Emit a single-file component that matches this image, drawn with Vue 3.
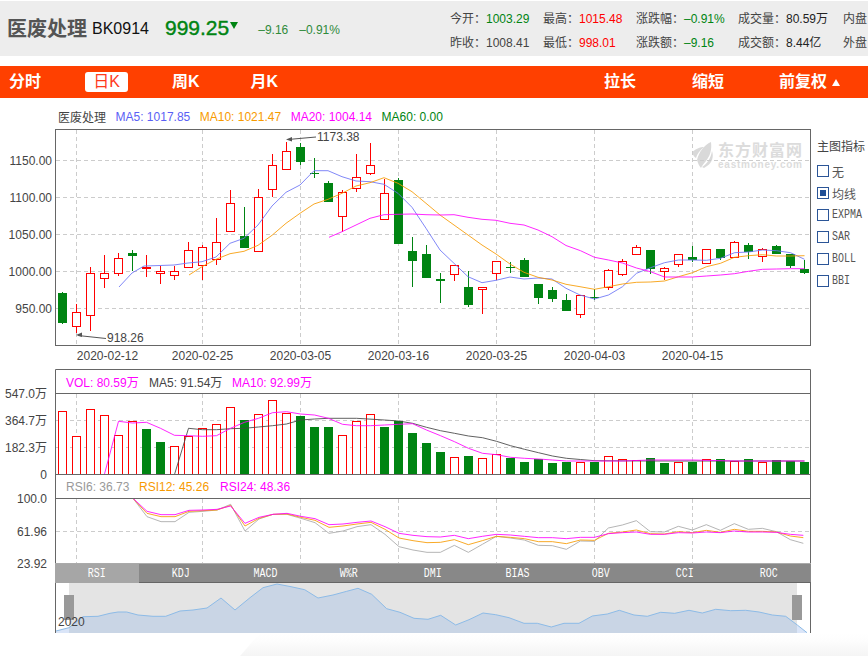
<script setup>
const stats = [
  [
    { k: '今开：', v: '1003.29', c: 'up', w: 93 },
    { k: '最高：', v: '1015.48', c: 'red', w: 93 },
    { k: '涨跌幅：', v: '–0.91%', c: 'up', w: 102 },
    { k: '成交量：', v: '80.59万', c: 'blk', w: 105 },
    { k: '内盘', v: '', c: 'blk', w: 25 },
  ],
  [
    { k: '昨收：', v: '1008.41', c: 'gry', w: 93 },
    { k: '最低：', v: '998.01', c: 'red', w: 93 },
    { k: '涨跌额：', v: '–9.16', c: 'up', w: 102 },
    { k: '成交额：', v: '8.44亿', c: 'blk', w: 105 },
    { k: '外盘', v: '', c: 'blk', w: 25 },
  ],
]

// [high, top, bottom, low, falling] in page pixels
const K = [
  [292,293,323,324,1],[304,312,326,333,0],[267,273,315,331,0],[255,273,278,288,0],[253,258,273,276,0],
  [250,253,256,271,1],[255,267,268,277,0],[266,271,273,284,0],[266,271,275,280,0],[242,250,267,268,0],
  [245,247,265,280,0],[218,242,259,265,0],[190,203,231,231,0],[207,236,248,248,1],[189,197,251,251,0],
  [154,165,189,197,0],[142,151,169,169,0],[143,147,162,165,1],[158,173,174,178,1],[181,183,202,202,1],
  [190,192,216,232,0],[154,177,188,192,0],[143,165,173,175,0],[179,193,219,219,0],[178,180,244,244,1],
  [237,251,261,287,1],[245,254,278,278,1],[273,279,281,303,1],[265,265,274,281,0],[271,287,305,307,1],
  [287,287,289,314,0],[261,261,273,280,0],[262,267,268,273,1],[258,260,277,277,1],[284,284,298,304,1],
  [287,290,299,302,1],[294,300,311,311,1],[295,295,314,318,0],[289,297,298,300,1],[269,270,287,290,0],
  [259,261,274,276,0],[245,247,254,254,0],[250,250,269,274,1],[267,268,271,280,0],[254,254,264,267,0],
  [246,257,260,262,1],[249,249,263,263,0],[249,249,258,260,1],[241,242,257,257,0],[243,245,252,259,1],
  [248,249,256,262,0],[245,246,254,254,1],[254,254,266,268,1],[260,269,273,274,1],
]
const candles = K.map(([h, t, b, l, f], i) => ({ c: 62.5 + 14 * i, h, t, b: Math.max(b, t + 1), l, f }))

// [top, falling]
const V = [
  [411,0],[436,0],[409,0],[415,0],[435,0],[421,0],[429,1],[442,1],[446,0],[436,0],[428,0],[424,0],[407,0],[420,1],
  [414,0],[400,0],[413,0],[416,1],[427,1],[427,1],[435,0],[421,0],[414,0],[427,1],[421,1],[433,1],[443,1],[452,1],
  [457,0],[456,1],[458,0],[454,0],[458,1],[462,1],[459,1],[463,1],[462,1],[462,0],[462,1],[456,0],[459,0],[460,0],
  [458,1],[463,1],[462,0],[462,1],[459,0],[459,1],[461,0],[459,1],[462,0],[460,1],[461,1],[462,1],
]
const vols = V.map(([t, f], i) => ({ c: 62.5 + 14 * i, t, f }))

const pts = (a) => a.map((p) => p.join(',')).join(' ')
const ma5 = pts([[119,287],[132,273],[144,266],[160,265.5],[174,265],[188,263],[202,261.7],[216,257],[230,243.3],[244,238.3],[258,225],[272,206],[286,192.3],[300,185],[314,170.7],[328,170.7],[342,176.7],[356,181],[370,181.7],[384,184.3],[398,193.3],[412,207.3],[426,228.3],[440,250],[454,263.3],[468,276.7],[482,282.7],[496,280.3],[510,277],[524,279],[538,278],[552,279],[566,288.3],[580,295],[594.5,299],[608.5,295],[622.5,286.7],[636.5,273.3],[650.5,267.7],[664.5,262.7],[678.5,260],[692.5,260],[706.5,260.3],[720.5,258.3],[734.5,252.7],[748.5,252],[762.5,250],[776.5,250.7],[790.5,252.7],[804.5,259.3]])
const ma10 = pts([[189,275],[202,266.7],[216,259.3],[230,253.7],[244,251.3],[258,245.3],[272,235.3],[286,223.3],[300,213.3],[314,204],[328,199.3],[342,193.3],[356,186],[370,182.7],[384,177.7],[398,183.3],[412,191.7],[426,203.3],[440,215],[454,225],[468,235],[482,245],[496,254],[510,264],[524,272.3],[538,277.3],[552,280],[566,284.3],[580,286.7],[594.5,289.3],[608.5,286.7],[622.5,284],[636.5,282.3],[650.5,282],[664.5,281],[678.5,276.7],[692.5,272.7],[706.5,266.7],[720.5,263.3],[734.5,257.3],[748.5,255.7],[762.5,254.7],[776.5,256],[790.5,256],[804.5,255.7]])
const ma20 = pts([[329,237.3],[342,231.7],[356,225],[370,218.3],[384,214.7],[398,214.3],[412,214],[426,214.7],[440,215],[454,214.7],[468,217.3],[482,219.3],[496,220.3],[510,223.3],[524,225],[538,230],[552,236.7],[566,245.5],[580.5,250.7],[594.5,257.3],[608.5,260],[622.5,263],[636.5,268],[650.5,271.7],[664.5,277],[678.5,277],[692.5,277],[706.5,276],[720.5,275],[734.5,273.7],[748.5,271.3],[762.5,269.3],[776.5,269],[790.5,268.7],[804.5,268.7]])

const volMa5 = pts([[104.5,474],[118.5,421.3],[132.5,423],[146.5,422.3],[160.5,428.3],[174.5,435.3],[188.5,435.7],[202.5,436.3],[216.5,435.7],[230.5,428.3],[244.5,422.3],[258.5,418.3],[272.5,412.7],[286.5,411.7],[300.5,414],[314.5,415],[328.5,418.3],[342.5,424.3],[356.5,425.7],[370.5,425.7],[384.5,425],[398.5,424.3],[412.5,423.7],[426.5,430],[440.5,435.7],[454.5,441.7],[468.5,448.3],[482.5,453.3],[496.5,454.7],[510.5,457.3],[524.5,458.3],[538.5,459],[552.5,460],[566.5,461],[622.5,461],[650.5,460],[692.5,460],[734.5,461],[804.5,461]])
const volMa10 = pts([[62.5,474.5],[174.5,474.5],[188.5,428.3],[202.5,429.7],[216.5,429.7],[230.5,428.7],[244.5,428.3],[258.5,427],[272.5,425.7],[286.5,424],[300.5,420],[314.5,419],[328.5,418.3],[356.5,418.3],[384.5,420],[398.5,421],[412.5,423.3],[426.5,427.3],[440.5,430.7],[454.5,433.3],[468.5,436],[482.5,437.7],[496.5,441.3],[510.5,445.7],[524.5,449.3],[538.5,452.7],[552.5,456],[566.5,458.3],[580.5,459.5],[594.5,460.7],[650.5,461],[804.5,461]])

const rz = (a, b) => pts([
  ...a.map(([x, y]) => [x / 3, 476 + y / 3]),
  ...b.map(([x, y]) => [434 + x / 3, 476 + y / 3]),
])
const rsi6 = rz(
  [[399,67],[441,122],[483,137],[525,137],[567,109],[609,106],[651,102],[692,85],[735,165],[777,129],[819,115],[861,115],[903,127],[945,140],[987,172],[1029,165],[1071,152],[1113,146],[1155,175],[1197,212],[1239,222],[1281,229]],
  [[19,229],[61,208],[103,229],[145,205],[187,181],[229,186],[271,192],[313,208],[355,209],[397,220],[439,195],[481,196],[523,156],[565,147],[607,134],[649,167],[691,168],[733,151],[775,162],[817,146],[859,163],[901,143],[943,160],[985,157],[1027,167],[1069,191],[1108,202]],
)
const rsi12 = rz(
  [[399,67],[441,112],[483,122],[525,122],[567,106],[609,104],[651,102],[692,88],[735,150],[777,127],[819,115],[861,114],[903,124],[945,133],[987,154],[1029,150],[1071,144],[1113,139],[1155,160],[1197,186],[1239,194],[1281,200]],
  [[19,199],[61,191],[103,206],[145,194],[187,181],[229,184],[271,188],[313,197],[355,197],[397,203],[439,192],[481,193],[523,172],[565,168],[607,162],[649,173],[691,174],[733,167],[775,170],[817,163],[859,169],[901,160],[943,166],[985,166],[1027,168],[1069,180],[1108,185]],
)
const rsi24 = rz(
  [[399,67],[441,106],[483,116],[525,116],[567,103],[609,102],[651,100],[692,90],[735,142],[777,124],[819,115],[861,112],[903,121],[945,128],[987,146],[1029,144],[1071,139],[1113,135],[1155,152],[1197,172],[1239,178],[1281,182]],
  [[19,183],[61,178],[103,188],[145,181],[187,175],[229,177],[271,181],[313,185],[355,185],[397,188],[439,184],[481,184],[523,173],[565,170],[607,168],[649,175],[691,175],[733,170],[775,171],[817,168],[859,170],[901,165],[943,168],[985,168],[1027,169],[1069,175],[1108,178]],
)

const miniLine = [[56,631],[69,627.7],[83,616.7],[98,616.3],[110,613.3],[118,612],[126.7,612],[138,615],[153,616.3],[165.7,616.3],[180,611],[193,610],[207,608],[221,598],[235,610],[250,597.7],[263,587.7],[277,584],[291,586.7],[304.7,589.7],[318,598],[333,595],[346.7,591.3],[358,588.3],[371.7,594.3],[386.7,608.7],[400,612.3],[414,618.3],[428,619.3],[440.7,615.3],[455.7,625],[469,619.7],[483,613],[495.7,614.7],[509,617.7],[524,623.3],[537.3,623.3],[551.3,627],[564,623.3],[579,623.3],[592.3,616],[607.3,614],[619.3,610.3],[634,615],[647.3,616.3],[660.7,612.3],[674.7,613.3],[689,610.3],[702.3,613],[715.7,609.3],[730.7,610.7],[745.7,610.3],[759,612],[772.3,615],[785.7,616.3],[797.3,625],[807,632.7]]
const miniPath = pts(miniLine)
const miniArea = pts([[56, 633], ...miniLine, [807, 633]])

const gridX = [76.5, 202.5, 300.5, 398.5, 496.5, 594.5, 692.5]
const mainY = [160.5, 197.5, 234.5, 271.5, 308.5]
const mainLabels = ['1150.00', '1100.00', '1050.00', '1000.00', '950.00']
const dates = [
  { t: '2020-02-12', x: 107.5 }, { t: '2020-02-25', x: 202.5 }, { t: '2020-03-05', x: 300.5 },
  { t: '2020-03-16', x: 398.5 }, { t: '2020-03-25', x: 496.5 }, { t: '2020-04-03', x: 594.5 }, { t: '2020-04-15', x: 692.5 },
]
const volLabels = [
  { t: '547.0万', y: 398 }, { t: '364.7万', y: 425 }, { t: '182.3万', y: 452 }, { t: '0', y: 479 },
]
const rsiLabels = [
  { t: '100.0', y: 503 }, { t: '61.96', y: 536 }, { t: '23.92', y: 568 },
]
const tabs = ['RSI', 'KDJ', 'MACD', 'W%R', 'DMI', 'BIAS', 'OBV', 'CCI', 'ROC']
const options = [
  { t: '无', on: false, mono: false }, { t: '均线', on: true, mono: false }, { t: 'EXPMA', on: false, mono: true },
  { t: 'SAR', on: false, mono: true }, { t: 'BOLL', on: false, mono: true }, { t: 'BBI', on: false, mono: true },
]
</script>

<template>
  <div class="page">
    <header class="head">
      <div class="quote">
        <span class="name">医废处理</span>
        <span class="code">BK0914</span>
        <span class="price">999.25</span>
        <i class="tri"></i>
        <span class="chg">–9.16</span>
        <span class="chg pct">–0.91%</span>
      </div>
      <div class="stats">
        <div v-for="(row, r) in stats" :key="r" class="stat-row">
          <div v-for="s in row" :key="s.k" class="stat" :style="{ width: s.w + 'px' }">
            <span class="k">{{ s.k }}</span><span :class="s.c">{{ s.v }}</span>
          </div>
        </div>
      </div>
    </header>

    <nav class="bar">
      <div class="bar-left">
        <span class="tb t1">分时</span>
        <span class="tb t2 on">日K</span>
        <span class="tb t3">周K</span>
        <span class="tb t4">月K</span>
      </div>
      <div class="bar-right">
        <span class="tb r1">拉长</span>
        <span class="tb r2">缩短</span>
        <span class="tb r3">前复权 <small class="up-tri"></small></span>
      </div>
    </nav>

    <section class="body">
      <div class="chart">
        <div class="legend">
          <span class="lg-name">医废处理</span>
          <span class="c-blue">MA5: 1017.85</span>
          <span class="c-orange">MA10: 1021.47</span>
          <span class="c-pink">MA20: 1004.14</span>
          <span class="c-green">MA60: 0.00</span>
        </div>

        <svg class="panels" width="815" height="434" viewBox="0 129 815 434">
          <!-- watermark -->
          <g class="wm">
            <path d="M692 152c5-4 9-5 12-5-4 3-7 7-8 11-2-1-3-3-4-6z" />
            <path d="M697 160c2-8 7-15 14-18 1 8-1 14-5 19-2 2-4 5-5 7-2-2-3-5-4-8z" />
            <path d="M702 167c5-3 9-9 10-16 2 6 0 12-5 15l-3 2z" />
            <text class="wm-cn" x="718" y="156" textLength="84">东方财富网</text>
            <text class="wm-en" x="718" y="168" textLength="84">eastmoney.com</text>
          </g>

          <!-- grids -->
          <g class="grid">
            <line v-for="y in mainY" :key="y" x1="56" x2="810" :y1="y" :y2="y" />
            <line v-for="x in gridX" :key="'m' + x" :x1="x" :x2="x" y1="130" y2="345" />
            <line x1="56" x2="810" y1="420.5" y2="420.5" />
            <line x1="56" x2="810" y1="447.5" y2="447.5" />
            <line v-for="x in gridX" :key="'v' + x" :x1="x" :x2="x" y1="394" y2="474" />
            <line x1="56" x2="810" y1="531.5" y2="531.5" />
            <line v-for="x in gridX" :key="'r' + x" :x1="x" :x2="x" y1="499" y2="563" />
          </g>

          <!-- candlesticks -->
          <g v-for="k in candles" :key="k.c">
            <line :class="k.f ? 'wick-g' : 'wick-r'" :x1="k.c" :x2="k.c" :y1="k.h" :y2="k.l" />
            <rect v-if="k.f" class="fill-g" :x="k.c - 4.5" :y="k.t" width="9" :height="k.b - k.t" />
            <rect v-else class="hollow" :x="k.c - 4" :y="k.t + 0.5" width="8" :height="k.b - k.t" />
          </g>
          <polyline class="ln blue" :points="ma5" />
          <polyline class="ln orange" :points="ma10" />
          <polyline class="ln pink" :points="ma20" />

          <!-- extremes -->
          <g class="mark">
            <line x1="78" y1="335.5" x2="106" y2="338.5" />
            <path d="M76 335l6-2.500v4.500z" />
            <line x1="288" y1="139.500" x2="316" y2="137" />
            <path d="M286 139.500l6-2.500v4.500z" />
          </g>
          <text class="ax" x="107" y="342">918.26</text>
          <text class="ax" x="317" y="141">1173.38</text>

          <!-- axis -->
          <text v-for="(t, i) in mainLabels" :key="t" class="ax end" x="52" :y="mainY[i] + 4">{{ t }}</text>
          <text v-for="d in dates" :key="d.t" class="ax mid" :x="d.x" y="360">{{ d.t }}</text>
          <text v-for="l in volLabels" :key="l.t" class="ax end" x="47" :y="l.y">{{ l.t }}</text>
          <text v-for="l in rsiLabels" :key="l.t" class="ax end" x="47" :y="l.y">{{ l.t }}</text>

          <!-- volume -->
          <text class="lg c-pink-f" x="66" y="387">VOL: 80.59万</text>
          <text class="lg c-dark-f" x="149" y="387">MA5: 91.54万</text>
          <text class="lg c-pink-f" x="232" y="387">MA10: 92.99万</text>
          <g v-for="v in vols" :key="'b' + v.c">
            <rect v-if="v.f" class="fill-g" :x="v.c - 4.5" :y="v.t" width="9" :height="474.5 - v.t" />
            <rect v-else class="hollow" :x="v.c - 4" :y="v.t + 0.5" width="8" :height="474 - v.t" />
          </g>
          <polyline class="ln dark" :points="volMa10" />
          <polyline class="ln pink" :points="volMa5" />

          <!-- RSI -->
          <text class="lg c-grey-f" x="66" y="491">RSI6: 36.73</text>
          <text class="lg c-orange-f" x="139" y="491">RSI12: 45.26</text>
          <text class="lg c-pink-f" x="220" y="491">RSI24: 48.36</text>
          <polyline class="ln grey" :points="rsi6" />
          <polyline class="ln orange" :points="rsi12" />
          <polyline class="ln pink" :points="rsi24" />

          <!-- frames -->
          <g class="frame">
            <rect x="55.500" y="129.500" width="755" height="216" />
            <path d="M55.500 563V369.500H810.500V563" />
            <path d="M56 393.500H810M56 474.500H810M56 498.500H810" />
          </g>
        </svg>

        <div class="tabs">
          <div v-for="(t, i) in tabs" :key="t" class="tab" :class="{ active: i === 0 }">
            <span class="mono">{{ t }}</span>
          </div>
        </div>

        <svg class="mini" width="815" height="50" viewBox="0 583 815 50">
          <defs>
            <clipPath id="sel"><rect x="69" y="583" width="728" height="50" /></clipPath>
          </defs>
          <rect x="69" y="583" width="728" height="50" fill="#e4e4e4" />
          <polygon :points="miniArea" fill="#dae5f8" />
          <polygon :points="miniArea" fill="#c9d5e5" clip-path="url(#sel)" />
          <polyline :points="miniPath" fill="none" stroke="#8dbbe6" stroke-width="1" />
          <rect x="64" y="595" width="10" height="25" fill="#999" />
          <rect x="792" y="595" width="10" height="25" fill="#999" />
          <text class="ax" x="58" y="626">2020</text>
          <path class="frame-line" d="M55.500 583V633M810.500 583V633" />
        </svg>
      </div>

      <aside class="side">
        <div class="side-title">主图指标</div>
        <div v-for="o in options" :key="o.t" class="opt">
          <i class="box" :class="{ checked: o.on }"></i>
          <span :class="o.mono ? 'mono mono-l' : ''">{{ o.t }}</span>
        </div>
      </aside>
    </section>
    <div class="foot"></div>
  </div>
</template>

<style scoped>
.page {
  width: 868px;
  height: 656px;
  overflow: hidden;
  background: #fff;
  font-family: "Liberation Sans", "Noto Sans CJK SC", sans-serif;
  font-size: 12px;
  color: #444;
}
.head {
  margin-top: 1px;
  height: 55px;
  background: #ededed;
  display: flex;
  justify-content: space-between;
  white-space: nowrap;
}
.quote {
  display: flex;
  align-items: center;
  padding-left: 7px;
}
.name {
  font-size: 20px;
  font-weight: 700;
  color: #555;
  width: 85px;
  margin-top: -3px;
}
.code {
  font-size: 16px;
  color: #111;
  width: 73px;
  margin-top: 1px;
}
.price {
  font-size: 21px;
  font-weight: 400;
  -webkit-text-stroke: 0.4px #008412;
  color: #008412;
  margin-top: -1px;
}
.tri {
  width: 0;
  height: 0;
  border-left: 4.500px solid transparent;
  border-right: 4.500px solid transparent;
  border-top: 7px solid #008412;
  margin: -7px 20px 0 1px;
}
.chg {
  color: #2f8a3a;
  font-size: 12px;
  margin-top: 3px;
}
.pct {
  margin-left: 11px;
}
.stats {
  width: 418px;
  padding-top: 4px;
}
.stat-row {
  display: flex;
  height: 24px;
  align-items: center;
}
.stat {
  flex: none;
}
.k { color: #444; }
.up { color: #008412; }
.red { color: #f00; }
.blk { color: #222; }
.gry { color: #444; }

.bar {
  margin-top: 10px;
  height: 32px;
  background: #ff4000;
  display: flex;
  justify-content: space-between;
  position: relative;
}
.bar-left, .bar-right {
  display: flex;
  align-items: center;
}
.tb {
  color: #fff;
  font-size: 16px;
  font-weight: 700;
  line-height: 20px;
  white-space: nowrap;
}
.t1 { margin-left: 9px; }
.t2 { margin-left: 44px; width: 43px; text-align: center; }
.t3 { margin-left: 44px; }
.t4 { margin-left: 51px; }
.on {
  background: #fff;
  color: #ff3a1c;
  font-weight: 400;
  border-radius: 3px;
}
.r1 { margin-right: 56px; }
.r2 { margin-right: 55px; }
.r3 { margin-right: 28px; display: flex; align-items: center; gap: 5px; }
.up-tri {
  width: 0;
  height: 0;
  border-left: 4px solid transparent;
  border-right: 4px solid transparent;
  border-bottom: 7px solid #fff;
}

.body {
  display: flex;
  margin-top: 8px;
}
.chart {
  width: 815px;
  flex: none;
}
.legend {
  height: 21px;
  padding-bottom: 2px;
  padding-left: 58px;
  display: flex;
  gap: 9.500px;
  align-items: center;
  white-space: nowrap;
}
.lg-name { color: #444; }
.c-blue { color: #5a5ff5; }
.c-orange { color: #f79a00; }
.c-pink { color: #f0f; }
.c-green { color: #008412; }

.panels, .mini { display: block; overflow: visible; }
text { font-family: "Liberation Sans", "Noto Sans CJK SC", sans-serif; font-size: 12px; }
.ax { fill: #444; }
.end { text-anchor: end; }
.mid { text-anchor: middle; }
.lg { font-size: 12px; }
.c-pink-f { fill: #f0f; }
.c-dark-f { fill: #444; }
.c-grey-f { fill: #999; }
.c-orange-f { fill: #f79a00; }
.grid line {
  stroke: #ccc;
  stroke-width: 1;
  stroke-dasharray: 4 3;
}
.wick-g { stroke: #008412; stroke-width: 1; }
.wick-r { stroke: #f00; stroke-width: 1; }
.fill-g { fill: #008412; }
.hollow { fill: #fff; stroke: #f00; stroke-width: 1; }
.ln { fill: none; stroke-width: 0.85; stroke-linejoin: round; }
.blue { stroke: #6a73f5; }
.orange { stroke: #f79a00; }
.pink { stroke: #f0f; }
.dark { stroke: #444; }
.grey { stroke: #a8a8a8; }
.mark line { stroke: #555; stroke-width: 1; }
.mark path { fill: #555; }
.frame rect, .frame path, .frame-line {
  fill: none;
  stroke: #666;
  stroke-width: 1;
}
.wm path { fill: #d9d9d9; }
.wm-cn { font-size: 16px; font-weight: 700; fill: #dcdcdc; }
.wm-en { font-size: 10px; font-weight: 700; fill: #dcdcdc; }

.tabs {
  margin-left: 55px;
  width: 756px;
  height: 20px;
  box-sizing: border-box;
  background: #888;
  display: grid;
  grid-template-columns: repeat(9, 84px);
  border-top: 1px solid #aaa;
  border-bottom: 1px solid #666;
  position: relative;
}
.tab {
  color: #fff;
  text-align: center;
  line-height: 18px;
}
.active { background: #a6a6a6; }
.mono {
  font-family: "Liberation Mono", monospace;
  font-size: 12px;
  display: inline-block;
  transform: scaleX(0.83);
}
.mono-l { transform-origin: left center; }

.side {
  flex: none;
  width: 53px;
  padding: 33px 0 0 2px;
  white-space: nowrap;
}
.side-title {
  font-size: 12px;
  color: #444;
  line-height: 16px;
  margin-bottom: 5px;
}
.opt {
  height: 22px;
  display: flex;
  align-items: center;
  color: #555;
}
.box {
  flex: none;
  width: 12px;
  height: 12px;
  box-sizing: border-box;
  border: 1px solid #2b5597;
  margin-right: 3px;
  padding: 2px;
  background-clip: content-box;
}
.checked { background-color: #1f4e96; }
.foot {
  position: absolute;
  left: 240px;
  top: 633px;
  width: 628px;
  height: 23px;
  background: linear-gradient(#fff, #fdfdfd 8px, #f9f9f9 15px, #f5f5f5);
  clip-path: polygon(20px 0, 100% 0, 100% 100%, 0 100%);
}
</style>
